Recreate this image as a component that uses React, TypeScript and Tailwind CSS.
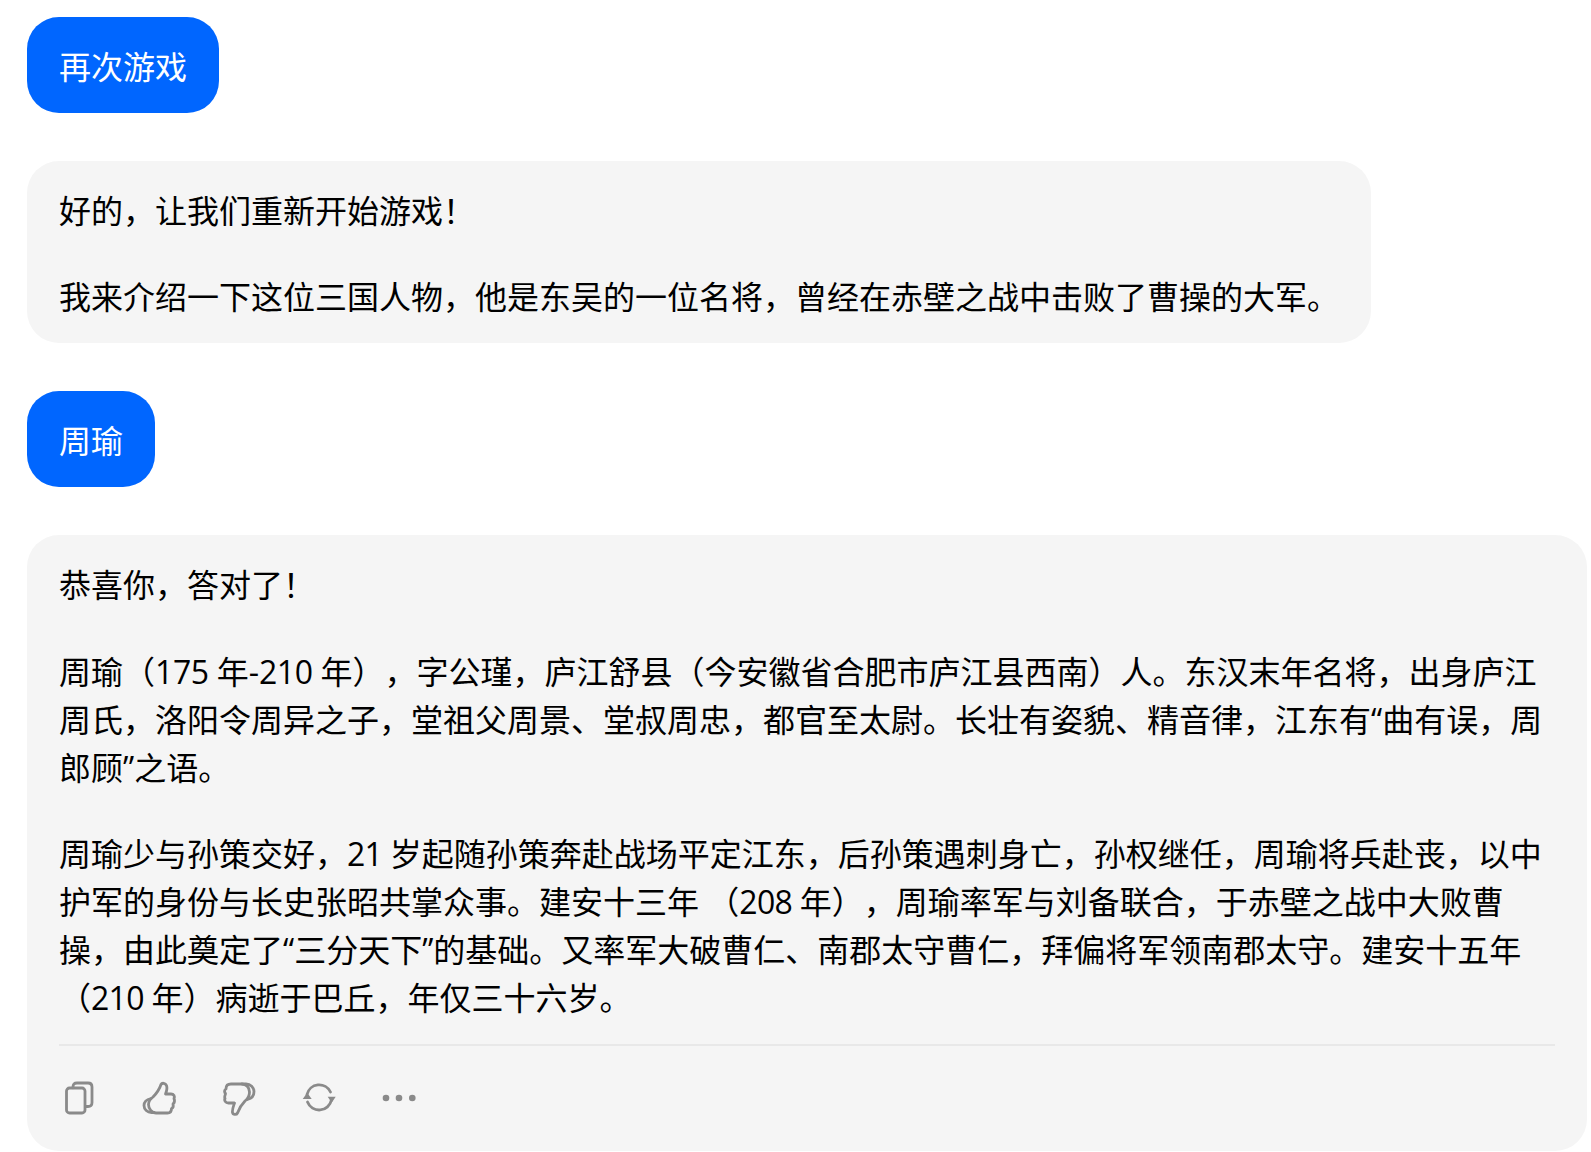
import React from "react";

const stroke = { fill: "none", stroke: "#8a8a8a", strokeWidth: 2.8, strokeLinecap: "round" as const, strokeLinejoin: "round" as const };

function Copy() {
  return (
    <svg width="36" height="36" viewBox="0 0 36 36" {...stroke}>
      <rect x="5.5" y="8" width="18.5" height="25" rx="3" />
      <path d="M12 7.8 V7 C12 4.2 13.2 3 16 3 H27 C29.8 3 31 4.2 31 7 V22.5 C31 25.3 29.8 26.5 27 26.5 H24.5" />
    </svg>
  );
}

function ThumbUp() {
  return (
    <svg width="36" height="36" viewBox="0 0 36 36" {...stroke}>
      <path d="M12 17 C15 14 18.5 9 20 4.5 C21 2.5 24.5 3 25.5 5.5 C26.5 8 25.5 11.5 24.5 14 H30 C33 14 34 16.5 33 18.5 C34 20.5 33.5 23 32 24 C32.5 26 32 28 30.5 28.5 C30.5 31 29.5 33 26.5 33 H15 C11 33 7.5 29 7.5 24.5 C7.5 21 10 18.5 12 17" />
      <path d="M10 18.5 C5.5 19.5 3 22 3 25.5 C3 29.5 6.5 32.5 10.5 32.5 H13" />
    </svg>
  );
}

function ThumbDown() {
  return (
    <svg width="36" height="36" viewBox="0 0 36 36" {...stroke}>
      <path d="M24 21 C21 24 18 29 16.5 33 C15.5 35 12 35 11.5 32.5 C11 30 12.5 26 13.5 23 H7.5 C4.5 23 3 20.5 4 18.5 C3 16.5 4.5 15 4.5 13.5 C3 12 3.5 9.5 5 9 C5 6 6.5 4 10 4 H21 C25 4 28.5 7.5 28.5 12 C28.5 16 26 19.5 24 21" />
      <path d="M26.5 19.5 C30.5 18.5 33 15.5 33 11.5 C33 7.5 29.5 4 25 4 H21" />
    </svg>
  );
}

function Refresh() {
  return (
    <svg width="36" height="36" viewBox="0 0 36 36">
      <path d="M6 14.5 A12.5 12.5 0 0 1 29.5 12" {...stroke} />
      <path d="M30.4 20 A12.5 12.5 0 0 1 6.5 22" {...stroke} />
      <path d="M1.7 19 L6.2 12.7 L10.7 19 Z M26.7 16.7 L34.7 16.7 L30.7 22.7 Z" fill="#8a8a8a" />
    </svg>
  );
}

function Dots() {
  return (
    <svg width="36" height="36" viewBox="0 0 36 36" fill="#8a8a8a">
      <circle cx="5" cy="18" r="3.3" />
      <circle cx="18" cy="18" r="3.3" />
      <circle cx="31.3" cy="18" r="3.3" />
    </svg>
  );
}

function UserBubble({ children }: { children: React.ReactNode }) {
  return <div className="self-start rounded-[32px] bg-[#0066ff] px-8 pt-[26px] pb-[22px] text-white">{children}</div>;
}

function Num({ children }: { children: React.ReactNode }) {
  return <span className="tracking-[-0.7px]">{children}</span>;
}

function NumLoose({ children }: { children: React.ReactNode }) {
  return <span className="tracking-[-0.4px]">{children}</span>;
}

export default function App() {
  return (
    <div
      lang="zh-CN"
      className="flex flex-col gap-12 pt-[17px] pl-[27px] pr-1 bg-white text-[32px] leading-[48px] text-black min-h-[1152px] [text-spacing-trim:space-all]"
      style={{ fontFamily: '"Open Sans", "Noto Sans CJK SC", sans-serif' }}
    >
      <UserBubble>再次游戏</UserBubble>
      <div className="self-start w-[1344px] rounded-[32px] bg-[#f5f5f5] px-8 pt-[26px] pb-[22px]">
        <p>好的，让我们重新开始游戏！</p>
        <p className="mt-[38px]">我来介绍一下这位三国人物，他是东吴的一位名将，曾经在赤壁之战中击败了曹操的大军。</p>
      </div>
      <UserBubble>周瑜</UserBubble>
      <div className="rounded-[32px] bg-[#f5f5f5] px-8 pt-[26px] pb-[35px]">
        <p>恭喜你，答对了！</p>
        <p className="mt-[39px]">周瑜（<NumLoose>175 </NumLoose>年-<NumLoose>210 </NumLoose>年），字公瑾，庐江舒县（今安徽省合肥市庐江县西南）人。东汉末年名将，出身庐江周氏，洛阳令周异之子，堂祖父周景、堂叔周忠，都官至太尉。长壮有姿貌、精音律，江东有“曲有误，周郎顾”之语。</p>
        <p className="mt-[38px]">周瑜少与孙策交好，<Num>21 </Num>岁起随孙策奔赴战场平定江东，后孙策遇刺身亡，孙权继任，周瑜将兵赴丧，以中护军的身份与长史张昭共掌众事。建安十三年 （<Num>208 </Num>年），周瑜率军与刘备联合，于赤壁之战中大败曹操，由此奠定了“三分天下”的基础。又率军大破曹仁、南郡太守曹仁，拜偏将军领南郡太守。建安十五年 （<Num>210 </Num>年）病逝于巴丘，年仅三十六岁。</p>
        <div className="mt-[22px] border-t-2 border-[#e8e8e8] pt-[34px] flex gap-11 pl-[2px]">
          <Copy />
          <ThumbUp />
          <ThumbDown />
          <Refresh />
          <Dots />
        </div>
      </div>
    </div>
  );
}
